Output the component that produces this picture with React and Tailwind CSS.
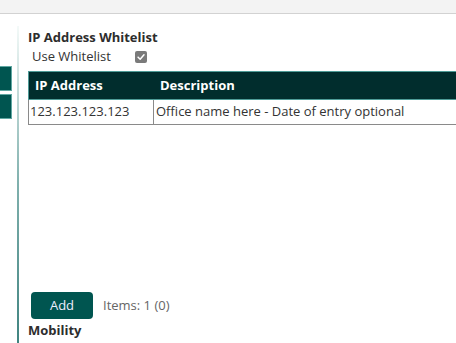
export default function App() {
  return (
    <div
      className="w-[456px] h-[343px] overflow-hidden bg-white flex flex-col text-[#333]"
      style={{ fontFamily: '"Open Sans", "Noto Sans", sans-serif' }}
    >
      {/* top bar */}
      <div className="h-[14px] shrink-0 bg-[#f3f3f3] border-b border-[#d2d2d2]" />

      <div className="flex flex-1 min-h-0">
        {/* side tabs */}
        <div className="w-[12px] shrink-0 pt-[52px] flex flex-col gap-[3px]">
          <div className="h-[25px] bg-[#005550] border border-[#5fa7a2] border-l-0" />
          <div className="h-[25px] bg-[#005550] border border-[#5fa7a2] border-l-0" />
        </div>

        {/* divider line */}
        <div className="ml-[5px] mt-[12px] w-[2px] shrink-0 bg-gradient-to-b from-[#f4faf9] via-[#7fb0ad] to-[#3f8480]" />

        {/* content */}
        <div className="flex-1 min-w-0 pl-[9px] pt-[14px] flex flex-col">
          <h2 className="text-[13px] leading-[18px] font-bold text-[#2d2d2d]">IP Address Whitelist</h2>
          <label className="flex items-center h-[20px] mt-[1px] pl-[4px] text-[13px] text-[#333]">
            <span className="w-[103px]">Use Whitelist</span>
            <span className="w-[12px] h-[12px] rounded-[2px] bg-[#7a7a7a] flex items-center justify-center">
              <svg viewBox="0 0 12 12" className="w-[10px] h-[10px]">
                <path d="M2.5 6.2 L5 8.6 L9.6 3.4" fill="none" stroke="#fff" strokeWidth="1.8" strokeLinecap="round" strokeLinejoin="round" />
              </svg>
            </span>
          </label>

          <div className="mt-[4px] w-[440px]">
            <div className="flex h-[29px] bg-[#012d2d] border border-[#4e9b97] text-white text-[13px] font-bold items-center">
              <div className="w-[125px] pl-[6px]">IP Address</div>
              <div className="pl-[6px]">Description</div>
            </div>
            <div className="flex h-[25px] border border-t-0 border-[#8a8a8a] text-[13px] text-[#333] items-center">
              <div className="w-[125px] h-full flex items-center pl-[1px] border-r border-[#8a8a8a]">123.123.123.123</div>
              <div className="pl-[2px]">Office name here - Date of entry optional</div>
            </div>
          </div>

          <div className="flex-1" />

          <div className="flex items-center gap-[10px] pl-[3px]">
            <button className="w-[62px] h-[27px] rounded-[4px] bg-[#005550] text-[#eef] text-[13px]">Add</button>
            <span className="text-[13px] text-[#666]">Items: 1 (0)</span>
          </div>
          <h3 className="text-[13px] leading-[18px] font-bold text-[#2d2d2d] mt-[2px] mb-[4px]">Mobility</h3>
        </div>
      </div>
    </div>
  );
}
